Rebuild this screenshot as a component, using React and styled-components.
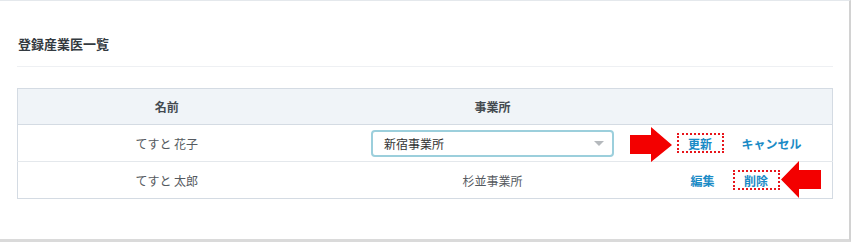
import React from "react";
import styled, { createGlobalStyle } from "styled-components";

const GlobalStyle = createGlobalStyle`
  body {
    margin: 0;
    background: #ffffff;
    font-family: "Noto Sans CJK JP", "Noto Sans", sans-serif;
  }
`;

const Card = styled.section`
  position: relative;
  box-sizing: border-box;
  width: 851px;
  height: 242px;
  background: #ffffff;
  border-top: 1px solid #e4e8ec;
  border-right: 2px solid #d2d2d2;
  border-bottom: 3px solid #dadada;
  padding: 0 16px 0 17px;
`;

const Title = styled.h2`
  margin: 0;
  padding: 33px 0 0 1px;
  height: 32px;
  font-size: 13px;
  font-weight: 700;
  color: #333a40;
  line-height: 20px;
  border-bottom: 1px solid #eef0f3;
`;

const Table = styled.table`
  margin-top: 21px;
  width: 100%;
  border-collapse: collapse;
  table-layout: fixed;
  border: 1px solid #d4dbe3;
  font-size: 12px;
`;

const HeadCell = styled.th`
  background: #f0f4f8;
  height: 35px;
  padding: 0;
  font-weight: 700;
  color: #444a50;
  text-align: center;
  border-bottom: 1px solid #d4dbe3;
`;

const Row = styled.tr`
  & + & td {
    border-top: 1px solid #e4e8ec;
  }
`;

const Cell = styled.td`
  height: 36px;
  padding: 0;
  color: #555a60;
  text-align: center;
`;

const ActionCell = styled.td`
  position: relative;
  height: 36px;
  padding: 0 0 0 ${(p) => p.$indent}px;
`;

const Actions = styled.div`
  display: flex;
  align-items: center;
  gap: 18px;
`;

const LinkButton = styled.span`
  box-sizing: border-box;
  display: inline-flex;
  align-items: center;
  justify-content: center;
  height: 20px;
  font-size: 12px;
  font-weight: 700;
  color: #1b8bc6;
  cursor: pointer;
  ${(p) =>
    p.$marked &&
    `
    width: 47px;
    border: 2px dotted #e8151b;
  `}
`;

const Select = styled.div`
  box-sizing: border-box;
  margin: 0 auto;
  width: 243px;
  height: 27px;
  display: flex;
  align-items: center;
  justify-content: space-between;
  padding: 0 8px 0 11px;
  border: 2px solid #9ccfdc;
  border-radius: 4px;
  background: #fff;
  color: #333;
  font-size: 12px;
  text-align: left;
`;

const Caret = styled.span`
  width: 0;
  height: 0;
  border-left: 5px solid transparent;
  border-right: 5px solid transparent;
  border-top: 5px solid #b5b9bd;
`;

const Arrow = styled.svg`
  position: absolute;
  top: ${(p) => p.$top}px;
  left: ${(p) => p.$left}px;
`;

function RightArrow() {
  return (
    <Arrow $top={2} $left={-40} width="42" height="36" viewBox="0 0 42 36">
      <polygon points="0,8 21,8 21,0 42,18 21,35 21,27 0,27" fill="#f30000" />
    </Arrow>
  );
}

function LeftArrow() {
  return (
    <Arrow $top={-1} $left={111} width="40" height="38" viewBox="0 0 40 38">
      <polygon points="0,18.5 18,0 18,9 40,9 40,28 18,28 18,37" fill="#f30000" />
    </Arrow>
  );
}

export default function App() {
  return (
    <>
      <GlobalStyle />
      <Card>
        <Title>登録産業医一覧</Title>
        <Table>
          <colgroup>
            <col style={{ width: 298 }} />
            <col style={{ width: 354 }} />
            <col />
          </colgroup>
          <thead>
            <tr>
              <HeadCell>名前</HeadCell>
              <HeadCell>事業所</HeadCell>
              <HeadCell />
            </tr>
          </thead>
          <tbody>
            <Row>
              <Cell>てすと 花子</Cell>
              <Cell>
                <Select>
                  <span>新宿事業所</span>
                  <Caret />
                </Select>
              </Cell>
              <ActionCell $indent={7}>
                <RightArrow />
                <Actions>
                  <LinkButton $marked>更新</LinkButton>
                  <LinkButton>キャンセル</LinkButton>
                </Actions>
              </ActionCell>
            </Row>
            <Row>
              <Cell>てすと 太郎</Cell>
              <Cell>杉並事業所</Cell>
              <ActionCell $indent={21}>
                <Actions>
                  <LinkButton>編集</LinkButton>
                  <LinkButton $marked>削除</LinkButton>
                </Actions>
                <LeftArrow />
              </ActionCell>
            </Row>
          </tbody>
        </Table>
      </Card>
    </>
  );
}
